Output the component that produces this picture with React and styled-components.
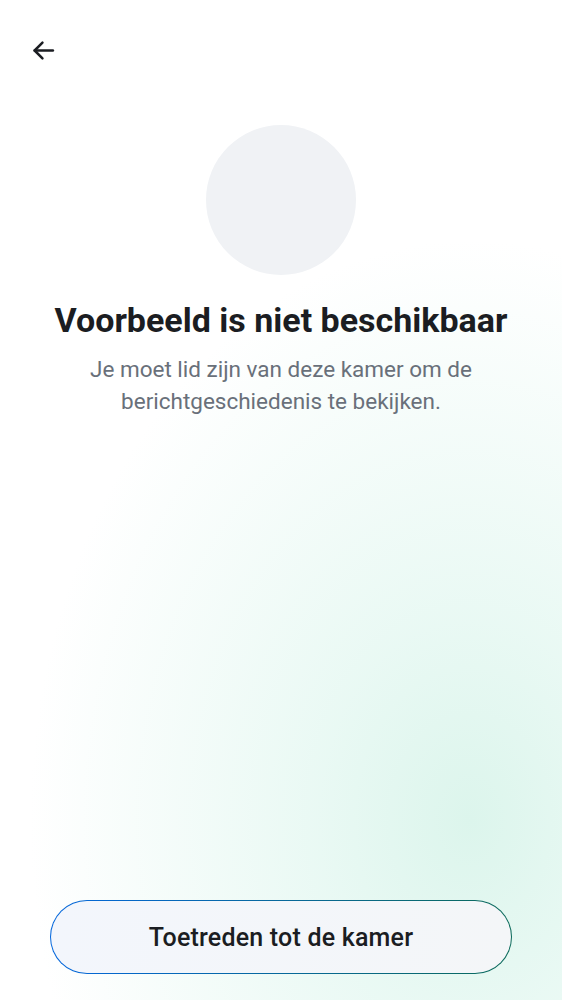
import React from "react";
import styled, { createGlobalStyle } from "styled-components";

const Global = createGlobalStyle`
  html, body { margin: 0; padding: 0; }
  body { font-family: Roboto, "Noto Sans", sans-serif; background: #fff; }
`;

const Screen = styled.div`
  width: 562px;
  height: 1000px;
  box-sizing: border-box;
  display: flex;
  flex-direction: column;
  background:
    radial-gradient(ellipse 440px 580px at 470px 820px, rgba(220, 245, 236, 1) 0%, rgba(226, 247, 240, 0.75) 35%, rgba(255, 255, 255, 0) 100%),
    #ffffff;
`;

const TopBar = styled.div`
  height: 100px;
  display: flex;
  align-items: flex-start;
  padding: 38px 0 0 31px;
  box-sizing: border-box;
`;

const BackButton = styled.button`
  width: 25px;
  height: 25px;
  padding: 0;
  border: none;
  background: none;
  color: #1b1d22;
  display: flex;
`;

const Content = styled.div`
  flex: 1;
  display: flex;
  flex-direction: column;
  align-items: center;
  padding-top: 25px;
`;

const Avatar = styled.div`
  width: 150px;
  height: 150px;
  border-radius: 50%;
  background: #f0f2f5;
`;

const Title = styled.h1`
  margin: 24px 0 0;
  font-size: 34px;
  font-weight: 700;
  color: #1b1d22;
  line-height: 42px;
  letter-spacing: 0;
`;

const Subtitle = styled.p`
  margin: 12px 0 0;
  font-size: 22.5px;
  line-height: 32px;
  color: #69707a;
  text-align: center;
  max-width: 400px;
`;

const Footer = styled.div`
  padding: 0 50px 26px;
  display: flex;
`;

const JoinButton = styled.button`
  flex: 1;
  height: 74px;
  border-radius: 37px;
  border: 1.5px solid transparent;
  background:
    linear-gradient(90deg, #f3f6fc, #f4f6f8) padding-box,
    linear-gradient(90deg, #0467dd, #0b6a5a) border-box;
  font-family: Roboto, sans-serif;
  font-size: 25px;
  font-weight: 500;
  color: #1b1d22;
  letter-spacing: 0.2px;
`;

export default function App() {
  return (
    <>
      <Global />
      <Screen>
        <TopBar>
          <BackButton aria-label="Terug">
            <svg width="25" height="25" viewBox="0 0 24 24" fill="none" stroke="currentColor" strokeWidth="2.4" strokeLinecap="round" strokeLinejoin="round">
              <path d="M21 12H3.5" />
              <path d="M11 4.5L3.5 12l7.5 7.5" />
            </svg>
          </BackButton>
        </TopBar>
        <Content>
          <Avatar />
          <Title>Voorbeeld is niet beschikbaar</Title>
          <Subtitle>Je moet lid zijn van deze kamer om de berichtgeschiedenis te bekijken.</Subtitle>
        </Content>
        <Footer>
          <JoinButton>Toetreden tot de kamer</JoinButton>
        </Footer>
      </Screen>
    </>
  );
}
